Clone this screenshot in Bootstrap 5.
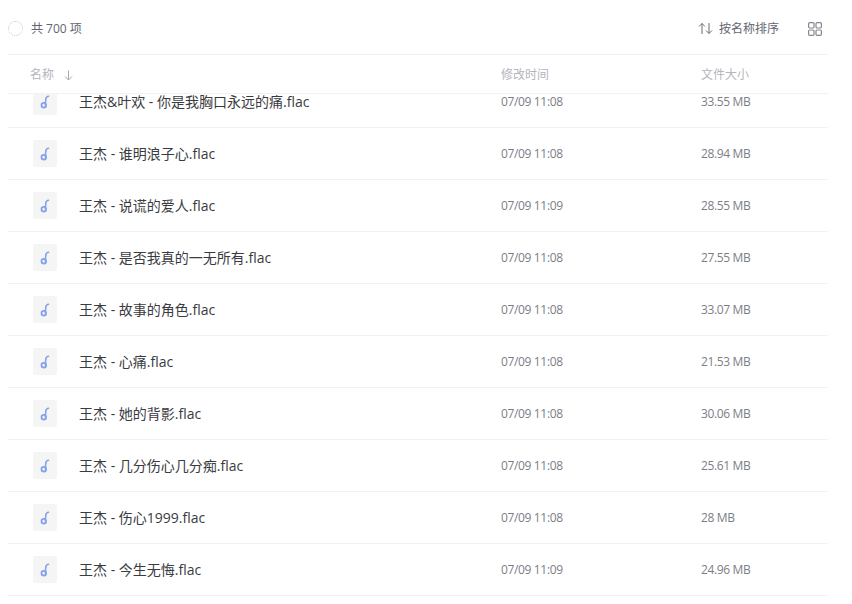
<!DOCTYPE html>
<html lang="zh-CN">
<head>
<meta charset="utf-8">
<title>文件列表</title>
<link href="https://cdn.jsdelivr.net/npm/bootstrap@5.3.0/dist/css/bootstrap.min.css" rel="stylesheet">
<style>
html,body{height:100%;overflow:hidden;background:#fff;}
body{font-family:"Open Sans","Noto Sans CJK SC",sans-serif;font-size:14px;color:#25262b;}
.shell{padding:0 24px 0 8px;height:604px;display:flex;flex-direction:column;}
.topbar{height:55px;border-bottom:1px solid #f2f2f3;flex:none;padding:3px 6px 0 0;}
.spinner{width:15px;height:15px;border:1.5px dotted #c6c6ca;border-radius:50%;margin-right:8px;}
.count{color:#62656f;font-size:12px;}
.sorter{color:#62656f;font-size:12px;gap:6px;margin-right:29px;}
.head,.line{display:grid;grid-template-columns:71px 422px 200px 1fr;}
.head{height:39px;border-bottom:1px solid #f2f2f3;flex:none;color:#b3b5bb;font-size:12px;align-items:center;padding-top:2px;}
.head .first{grid-column:2;margin-left:-49px;display:flex;align-items:center;gap:10px;}
.viewport{flex:1;overflow:hidden;}
.scroller{margin-top:-18px;}
.line{height:52px;border-bottom:1px solid #f2f2f3;align-items:center;}
.fileicon{width:24px;height:27px;background:#f5f5f6;border-radius:3px;margin-left:25px;display:flex;align-items:center;justify-content:center;}
.fname{color:#3a3b41;white-space:nowrap;line-height:20px;}
.meta{color:#7c7e86;font-size:12px;letter-spacing:-.35px;}
</style>
</head>
<body>
<svg width="0" height="0" class="position-absolute">
<symbol id="note" viewBox="0 0 24 27"><path d="M15.6 8.2c-1.8.2-2.5 1.1-2.7 2.5l-.7 6" fill="none" stroke="#84a3ea" stroke-width="1.6" stroke-linecap="round"/><circle cx="10.8" cy="17.2" r="2.3" fill="none" stroke="#84a3ea" stroke-width="1.8"/></symbol>
</svg>
<div class="shell">
  <div class="topbar d-flex align-items-center justify-content-between">
    <div class="d-flex align-items-center"><span class="spinner"></span><span class="count">共 700 项</span></div>
    <div class="d-flex align-items-center">
      <div class="sorter d-flex align-items-center">
        <svg width="15" height="13" viewBox="0 0 15 13" fill="none" stroke="#6b6d75" stroke-width="1"><path d="M4 12V1.5M1 4.5l3-3 3 3M11 1v10.5M8 8.5l3 3 3-3"/></svg>
        <span>按名称排序</span>
      </div>
      <svg width="14" height="14" viewBox="0 0 14 14" fill="none" stroke="#85878e" stroke-width="1.2"><rect x=".6" y=".6" width="5.4" height="5.4" rx="1.2"/><rect x="8" y=".6" width="5.4" height="5.4" rx="1.2"/><rect x=".6" y="8" width="5.4" height="5.4" rx="1.2"/><rect x="8" y="8" width="5.4" height="5.4" rx="1.2"/></svg>
    </div>
  </div>
  <div class="head">
    <span></span>
    <span class="first"><span>名称</span><svg width="9" height="11" viewBox="0 0 9 11" fill="none" stroke="#a9abb1" stroke-width="1"><path d="M4.5 .5v9.5M1 6.5L4.5 10 8 6.5"/></svg></span>
    <span>修改时间</span>
    <span>文件大小</span>
  </div>
  <div class="viewport">
    <div class="scroller">
      <div class="line"><div class="fileicon"><svg width="24" height="27"><use href="#note"/></svg></div><div class="fname">王杰&amp;叶欢 - 你是我胸口永远的痛.flac</div><div class="meta">07/09 11:08</div><div class="meta">33.55 MB</div></div>
      <div class="line"><div class="fileicon"><svg width="24" height="27"><use href="#note"/></svg></div><div class="fname">王杰 - 谁明浪子心.flac</div><div class="meta">07/09 11:08</div><div class="meta">28.94 MB</div></div>
      <div class="line"><div class="fileicon"><svg width="24" height="27"><use href="#note"/></svg></div><div class="fname">王杰 - 说谎的爱人.flac</div><div class="meta">07/09 11:09</div><div class="meta">28.55 MB</div></div>
      <div class="line"><div class="fileicon"><svg width="24" height="27"><use href="#note"/></svg></div><div class="fname">王杰 - 是否我真的一无所有.flac</div><div class="meta">07/09 11:08</div><div class="meta">27.55 MB</div></div>
      <div class="line"><div class="fileicon"><svg width="24" height="27"><use href="#note"/></svg></div><div class="fname">王杰 - 故事的角色.flac</div><div class="meta">07/09 11:08</div><div class="meta">33.07 MB</div></div>
      <div class="line"><div class="fileicon"><svg width="24" height="27"><use href="#note"/></svg></div><div class="fname">王杰 - 心痛.flac</div><div class="meta">07/09 11:08</div><div class="meta">21.53 MB</div></div>
      <div class="line"><div class="fileicon"><svg width="24" height="27"><use href="#note"/></svg></div><div class="fname">王杰 - 她的背影.flac</div><div class="meta">07/09 11:08</div><div class="meta">30.06 MB</div></div>
      <div class="line"><div class="fileicon"><svg width="24" height="27"><use href="#note"/></svg></div><div class="fname">王杰 - 几分伤心几分痴.flac</div><div class="meta">07/09 11:08</div><div class="meta">25.61 MB</div></div>
      <div class="line"><div class="fileicon"><svg width="24" height="27"><use href="#note"/></svg></div><div class="fname">王杰 - 伤心1999.flac</div><div class="meta">07/09 11:08</div><div class="meta">28 MB</div></div>
      <div class="line"><div class="fileicon"><svg width="24" height="27"><use href="#note"/></svg></div><div class="fname">王杰 - 今生无悔.flac</div><div class="meta">07/09 11:09</div><div class="meta">24.96 MB</div></div>
    </div>
  </div>
</div>
<script src="https://cdn.jsdelivr.net/npm/bootstrap@5.3.0/dist/js/bootstrap.bundle.min.js"></script>
</body>
</html>
